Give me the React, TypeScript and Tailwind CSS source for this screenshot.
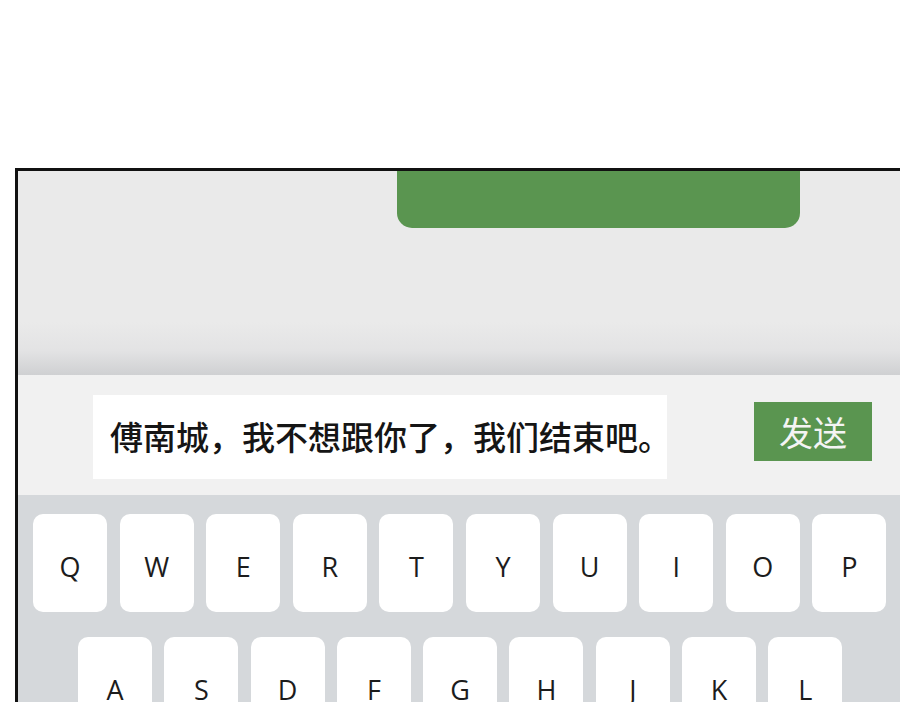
const ROW1 = ["Q", "W", "E", "R", "T", "Y", "U", "I", "O", "P"];
const ROW2 = ["A", "S", "D", "F", "G", "H", "J", "K", "L"];

const CJK = { fontFamily: "'Noto Sans CJK SC', 'Noto Sans', sans-serif" };

function Key({ label }: { label: string }) {
  return (
    <div
      className="w-[74px] h-[98px] shrink-0 rounded-[10px] bg-white flex items-center justify-center pt-[8px] text-[27px] text-[#1c1c1c]"
      style={{ fontFamily: "'Open Sans', 'Noto Sans', sans-serif" }}
    >
      {label}
    </div>
  );
}

export default function App() {
  return (
    <div className="w-[900px] h-[702px] bg-white overflow-hidden flex flex-col">
      <div className="h-[168px] shrink-0" />

      {/* phone frame */}
      <div className="ml-[15px] flex-1 flex flex-col border-l-[3px] border-t-[3px] border-[#111]">
        {/* chat area with notch-style green bar */}
        <div className="h-[204px] shrink-0 bg-[linear-gradient(to_bottom,#eaeaea_0%,#eaeaea_74%,#e3e3e4_88%,#cfd0d2_100%)]">
          <div className="ml-[379px] w-[403px] h-[57px] rounded-b-[15px] bg-[#5a9550]" />
        </div>

        {/* input bar */}
        <div className="h-[120px] shrink-0 bg-[#f1f1f1] flex items-start">
          <div
            className="ml-[75px] mt-[20px] w-[574px] h-[84px] bg-white flex items-center pl-[17px] text-[33px] font-medium text-[#151515] whitespace-nowrap"
            style={CJK}
          >
            傅南城，我不想跟你了，我们结束吧。
          </div>
          <div
            className="ml-[87px] mt-[27px] w-[118px] h-[59px] bg-[#5a9550] flex items-center justify-center text-[34px] text-[#f4f4f4]"
            style={CJK}
          >
            发送
          </div>
        </div>

        {/* keyboard */}
        <div className="flex-1 bg-[#d5d8db] pt-[19px] flex flex-col gap-[25px]">
          <div className="flex pl-[15px] gap-[12.6px]">
            {ROW1.map((k) => (
              <Key key={k} label={k} />
            ))}
          </div>
          <div className="flex pl-[60px] gap-[12.3px]">
            {ROW2.map((k) => (
              <Key key={k} label={k} />
            ))}
          </div>
        </div>
      </div>
    </div>
  );
}
